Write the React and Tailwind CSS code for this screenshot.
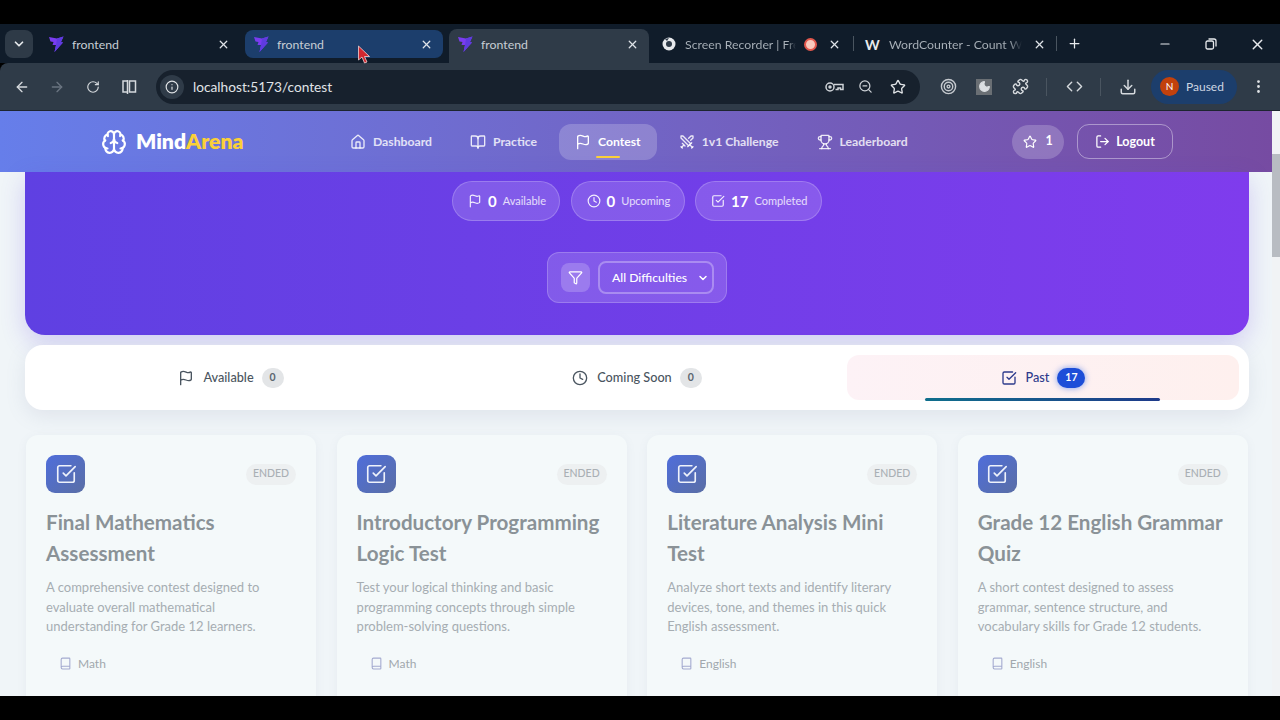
import React from 'react';
import {
  ArrowLeft, ArrowRight, Book, BookOpen, ChevronDown, Clock, Code, Download, Filter, Flag, Home,
  Info, LogOut, Minus, Moon, MoreVertical, Plus, Puzzle, RotateCw, SquareCheckBig,
  Star, Swords, Trophy, X, Brain, Target, ZoomOut,
} from 'lucide-react';

// Vite favicon.
function Bolt() {
  return (
    <svg width="17" height="18" viewBox="0 0 17 18" className="shrink-0">
      <path d="M1 2 L9 3.5 L15.5 1.5 L13 7 L15 7.5 L6.5 17 L8 10 L4.5 10 L5.5 7 L2.5 6.5 Z" fill="#7a3cf0" />
      <path d="M9 3.5 L15.5 1.5 L13 7 L15 7.5 L6.5 17 L8 10 Z" fill="#5f3be0" />
    </svg>
  );
}

function KeyIcon() {
  return (
    <svg width="19" height="12" viewBox="0 0 19 12" fill="none" stroke="#cfd3d8" strokeWidth="1.5">
      <circle cx="5" cy="6" r="4" />
      <circle cx="5" cy="6" r="1" fill="#cfd3d8" />
      <path d="M9 3.5 H18 V8.5 H15.5 V7 H13 V8.5 H10.5" />
    </svg>
  );
}

function PanelIcon() {
  return (
    <svg width="16" height="16" viewBox="0 0 16 16" fill="none" stroke="#d5d9dd" strokeWidth="1.5">
      <path d="M6 2 H2 V13 H6" />
      <path d="M6.5 1 V15" />
      <rect x="8.5" y="2" width="6" height="11" />
    </svg>
  );
}

function RestoreIcon() {
  return (
    <svg width="12" height="12" viewBox="0 0 12 12" fill="none" stroke="#e8eaed" strokeWidth="1.3">
      <rect x="1" y="3" width="7.5" height="8" rx="1.5" />
      <path d="M3.5 1 H9 Q11 1 11 3 V8.5" />
    </svg>
  );
}

function RecorderIcon() {
  return (
    <svg width="14" height="14" viewBox="0 0 14 14" className="shrink-0">
      <circle cx="7" cy="7" r="6.5" fill="#e8eaed" />
      <circle cx="7" cy="7" r="3" fill="#2f3b48" />
      <path d="M3 2 L7 1 L5 4 Z" fill="#2f3b48" />
    </svg>
  );
}

function Cursor() {
  return (
    <svg width="14" height="20" viewBox="0 0 14 20" className="absolute left-[357px] top-[45px] z-20">
      <path d="M1.5 1 L1.5 15 L5 12 L7.5 18 L10 17 L7.5 11.5 L12.5 11.5 Z" fill="#d0272f" stroke="#f4d3d3" strokeWidth="0.8" />
    </svg>
  );
}

// Browser tab with the lightning favicon.
function ViteTab({ bg, width }) {
  return (
    <div className={`h-[28px] rounded-lg flex items-center pl-[8px] ${width} ${bg}`}>
      <Bolt />
      <span className="ml-[7px] mt-[2px] text-[12.3px] flex-1 text-[#c7cdd4]">frontend</span>
      <X size={13} strokeWidth={2.4} className="text-[#dfe3e8] mr-[10px]" />
    </div>
  );
}

function NavItem({ icon: Icon, label, active }) {
  return (
    <div className={`relative h-[36px] rounded-xl px-[16px] flex items-center gap-[7px] whitespace-nowrap ${active ? 'bg-white/20' : ''}`}>
      <Icon size={16} className={active ? 'text-white' : 'text-white/85'} />
      <span className={`mt-[1px] text-[12.2px] font-bold ${active ? 'text-white' : 'text-white/80'}`}>{label}</span>
      {active && <div className="absolute left-[37px] bottom-[2px] w-[24px] h-[2px] rounded bg-[#fbd038]" />}
    </div>
  );
}

function StatPill({ icon: Icon, n, label, width }) {
  return (
    <div className={`h-[40px] rounded-[20px] bg-white/15 border border-white/20 pl-[15px] flex items-center ${width}`}>
      <Icon size={14} className="text-white/90" />
      <span className="ml-[6px] text-[15px] font-bold text-white">{n}</span>
      <span className="ml-[6px] text-[11px] text-white/80">{label}</span>
    </div>
  );
}

function TabItem({ icon: Icon, label, count, active }) {
  return (
    <div className={`relative flex-1 h-[45px] rounded-xl flex items-center justify-center ${active ? 'bg-gradient-to-r from-[#fdf2f6] to-[#fef0ee]' : ''}`}>
      <Icon size={16} className={active ? 'text-[#2d3a8c]' : 'text-[#4a5560]'} />
      <span className={`ml-[9px] text-[12.7px] font-medium ${active ? 'text-[#2d3a8c]' : 'text-[#4a5560]'}`}>{label}</span>
      <span className={`ml-[8px] h-[20px] rounded-full flex items-center justify-center text-[10.5px] font-bold ${active ? 'w-[28px] bg-[#1d4ed8] text-white shadow-[0_0_6px_rgba(37,99,235,0.6)]' : 'w-[22px] bg-[#e3e5e7] text-[#5c6670]'}`}>{count}</span>
      {active && <div className="absolute left-[78px] bottom-[-1px] w-[235px] h-[3px] rounded bg-gradient-to-r from-[#0f6e8c] to-[#1e3a8a]" />}
    </div>
  );
}

function ContestCard({ title, desc, subject }) {
  return (
    <div className="w-[290px] h-[280px] shrink-0 rounded-xl bg-[#f4f9fa] shadow-[0_2px_10px_rgba(120,130,150,0.08)] px-[20px] pt-[20px]">
      <div className="flex items-center justify-between">
        <div className="w-[39px] h-[38px] rounded-[9px] bg-gradient-to-br from-[#4f6ddb] to-[#5a6ea5] flex items-center justify-center">
          <SquareCheckBig size={22} className="text-[#eef2fb]" strokeWidth={1.8} />
        </div>
        <span className="h-[21px] w-[50px] rounded-full bg-[#edf0f1] flex items-center justify-center text-[10.5px] font-medium text-[#a9afb4]">ENDED</span>
      </div>
      <h3 className="mt-[14px] text-[20.6px] leading-[31px] font-bold text-[#8a9297]">{title}</h3>
      <p className="mt-[9px] text-[13px] leading-[19.5px] text-[#a6adb2]">{desc}</p>
      <div className="mt-[18px] ml-[13px] flex items-center gap-[6px]">
        <Book size={13} className="text-[#a4abd0]" />
        <span className="text-[12px] text-[#a1a8ad]">{subject}</span>
      </div>
    </div>
  );
}

const cards = [
  { title: 'Final Mathematics Assessment', desc: 'A comprehensive contest designed to evaluate overall mathematical understanding for Grade 12 learners.', subject: 'Math' },
  { title: 'Introductory Programming Logic Test', desc: 'Test your logical thinking and basic programming concepts through simple problem-solving questions.', subject: 'Math' },
  { title: 'Literature Analysis Mini Test', desc: 'Analyze short texts and identify literary devices, tone, and themes in this quick English assessment.', subject: 'English' },
  { title: 'Grade 12 English Grammar Quiz', desc: 'A short contest designed to assess grammar, sentence structure, and vocabulary skills for Grade 12 students.', subject: 'English' },
];

export default function App() {
  return (
    <div className="relative w-[1280px] h-[720px] bg-black overflow-hidden flex flex-col [font-family:'Lato','Open_Sans',sans-serif]">
      <Cursor />
      <div className="h-[24px] shrink-0" />

      {/* Tab strip */}
      <div className="h-[39px] shrink-0 bg-[#101c2a] flex items-start pt-[6px] pl-[5px]">
        <div className="w-[28px] h-[28px] rounded-lg bg-[#2e3a47] flex items-center justify-center">
          <ChevronDown size={14} strokeWidth={3} className="text-[#e5e8eb]" />
        </div>
        <div className="ml-[7px]"><ViteTab bg="" width="w-[200px]" /></div>
        <div className="ml-[5px]"><ViteTab bg="bg-[#1c3e6c]" width="w-[198px]" /></div>
        <div className="ml-[6px] -mt-[1px] h-[34px] w-[200px] rounded-t-lg bg-[#2f3b48] pt-[1px]">
          <ViteTab bg="" width="w-full" />
        </div>
        <div className="w-[204px] h-[28px] flex items-center pl-[13px]">
          <RecorderIcon />
          <span className="ml-[9px] mt-[2px] text-[12.3px] w-[111px] whitespace-nowrap text-transparent bg-clip-text bg-gradient-to-r from-[#aab2ba] from-92% to-transparent">Screen Recorder | Fre</span>
          <div className="ml-[8px] w-[13px] h-[13px] rounded-full bg-[#f8c9bd] border-2 border-[#e2574c] shrink-0" />
          <X size={13} strokeWidth={2.4} className="text-[#dfe3e8] ml-[11px]" />
        </div>
        <div className="w-px h-[15px] bg-[#4a5560] mt-[6px]" />
        <div className="w-[202px] h-[28px] flex items-center pl-[11px]">
          <span className="w-[14px] text-[14px] font-bold text-[#e8eaed]">W</span>
          <span className="ml-[10px] mt-[2px] text-[12.3px] w-[133px] whitespace-nowrap text-transparent bg-clip-text bg-gradient-to-r from-[#aab2ba] from-90% to-transparent">WordCounter - Count W</span>
          <X size={13} strokeWidth={2.4} className="text-[#dfe3e8] ml-[11px]" />
        </div>
        <div className="w-px h-[15px] bg-[#4a5560] mt-[6px]" />
        <Plus size={15} className="text-[#e8eaed] ml-[10px] mt-[6px]" />
        <div className="ml-auto flex items-center h-[28px]">
          <Minus size={14} className="text-[#e8eaed] mr-[33px]" />
          <RestoreIcon />
          <X size={17} className="text-[#e8eaed] ml-[32px] mr-[14px]" />
        </div>
      </div>

      {/* Toolbar */}
      <div className="h-[48px] shrink-0 bg-[#2f3b48] rounded-tl-lg flex items-center border-b border-[#1d2530]">
        <ArrowLeft size={16} className="text-[#d5d9dd] ml-[14px]" />
        <ArrowRight size={16} className="text-[#6a7480] ml-[19px]" />
        <RotateCw size={14} className="text-[#d5d9dd] ml-[21px]" />
        <div className="ml-[21px]"><PanelIcon /></div>
        <div className="ml-[19px] w-[764px] h-[34px] rounded-full bg-[#17212d] flex items-center">
          <div className="ml-[4px] w-[24px] h-[24px] rounded-full bg-[#2f3b48] flex items-center justify-center">
            <Info size={14} className="text-[#e0e3e6]" />
          </div>
          <span className="ml-[9px] mt-[1px] text-[13.7px] text-[#e0e4e8]">localhost:5173/contest</span>
          <div className="ml-auto flex items-center">
            <KeyIcon />
            <ZoomOut size={15} className="text-[#cfd3d8] ml-[14px]" />
            <Star size={16} className="text-[#e0e3e6] ml-[17px] mr-[14px]" />
          </div>
        </div>
        <Target size={17} className="text-[#c5c9ce] ml-[20px]" />
        <div className="ml-[19px] w-[16px] h-[16px] bg-[#6a6f74] flex items-center justify-center">
          <Moon size={13} className="text-[#dcdfe2] fill-[#dcdfe2]" />
        </div>
        <Puzzle size={17} className="text-[#d5d9dd] ml-[20px]" />
        <div className="w-px h-[18px] bg-[#4a5560] ml-[17px]" />
        <Code size={17} className="text-[#d5d9dd] ml-[19px]" />
        <div className="w-px h-[18px] bg-[#4a5560] ml-[17px]" />
        <Download size={18} className="text-[#d5d9dd] ml-[18px]" />
        <div className="ml-[14px] w-[86px] h-[34px] rounded-full bg-[#1c3e6c] flex items-center">
          <div className="ml-[9px] w-[19px] h-[19px] rounded-full bg-[#c2410c] flex items-center justify-center text-[10px] text-white">N</div>
          <span className="ml-[7px] text-[12px] text-[#cdd6e2]">Paused</span>
        </div>
        <MoreVertical size={17} className="text-[#e0e3e6] ml-[13px]" />
      </div>

      {/* Page */}
      <div className="h-[585px] shrink-0 flex bg-[#f0f5f8] overflow-hidden">
        <div className="w-[1272px] shrink-0">
          {/* App nav */}
          <div className="h-[61px] bg-gradient-to-r from-[#667eea] to-[#764ba2] flex items-center">
            <Brain size={26} className="text-white ml-[101px]" />
            <span className="ml-[9px] w-[108px] text-[21.2px] font-extrabold text-white">Mind<span className="text-[#fbd038]">Arena</span></span>
            <div className="ml-[90px] flex items-center gap-[6px] w-[587px]">
              <NavItem icon={Home} label="Dashboard" />
              <NavItem icon={BookOpen} label="Practice" />
              <NavItem icon={Flag} label="Contest" active />
              <NavItem icon={Swords} label="1v1 Challenge" />
              <NavItem icon={Trophy} label="Leaderboard" />
            </div>
            <div className="ml-[91px] h-[34px] w-[52px] rounded-full bg-white/20 flex items-center justify-center gap-[8px]">
              <Star size={14} className="text-white" />
              <span className="text-[12.5px] font-bold text-white">1</span>
            </div>
            <div className="ml-[13px] h-[35px] w-[96px] rounded-xl border border-white/40 flex items-center justify-center gap-[6px]">
              <LogOut size={15} className="text-white" />
              <span className="mt-[1px] text-[12.5px] font-bold text-white">Logout</span>
            </div>
          </div>

          <div className="pl-[25px] pr-[23px]">
            {/* Hero */}
            <div className="h-[163px] rounded-b-[20px] bg-gradient-to-r from-[#5f40e2] to-[#7f3ced] shadow-[0_8px_24px_rgba(95,64,226,0.22)] flex flex-col items-center pt-[9px]">
              <div className="flex items-center gap-[10.5px]">
                <StatPill icon={Flag} n="0" label="Available" width="w-[108px]" />
                <StatPill icon={Clock} n="0" label="Upcoming" width="w-[114px]" />
                <StatPill icon={SquareCheckBig} n="17" label="Completed" width="w-[127px]" />
              </div>
              <div className="mt-[31px] h-[51px] w-[180px] rounded-xl bg-white/15 border border-white/20 flex items-center pl-[13px]">
                <div className="w-[29px] h-[29px] rounded-lg bg-white/20 flex items-center justify-center">
                  <Filter size={15} className="text-white" />
                </div>
                <div className="ml-[8px] w-[116px] h-[33px] rounded-lg border-2 border-white/30 flex items-center pl-[12px] pr-[3px] justify-between">
                  <span className="text-[12.2px] mt-[1px] font-medium text-white">All Difficulties</span>
                  <ChevronDown size={12} strokeWidth={3} className="text-white" />
                </div>
              </div>
            </div>

            {/* Tabs */}
            <div className="mt-[10px] h-[65px] rounded-[18px] bg-white shadow-[0_6px_20px_rgba(120,130,160,0.14)] flex items-center gap-[14px] px-[10px]">
              <TabItem icon={Flag} label="Available" count="0" />
              <TabItem icon={Clock} label="Coming Soon" count="0" />
              <TabItem icon={SquareCheckBig} label="Past" count="17" active />
            </div>

            {/* Contest cards */}
            <div className="mt-[25px] ml-px flex gap-[20.6px]">
              {cards.map((c) => <ContestCard key={c.title} {...c} />)}
            </div>
          </div>
        </div>

        {/* Scrollbar */}
        <div className="w-[8px] shrink-0 bg-[#f1f3f5] pt-[43px]">
          <div className="h-[103px] bg-[#b8bcc2]" />
        </div>
      </div>
    </div>
  );
}
